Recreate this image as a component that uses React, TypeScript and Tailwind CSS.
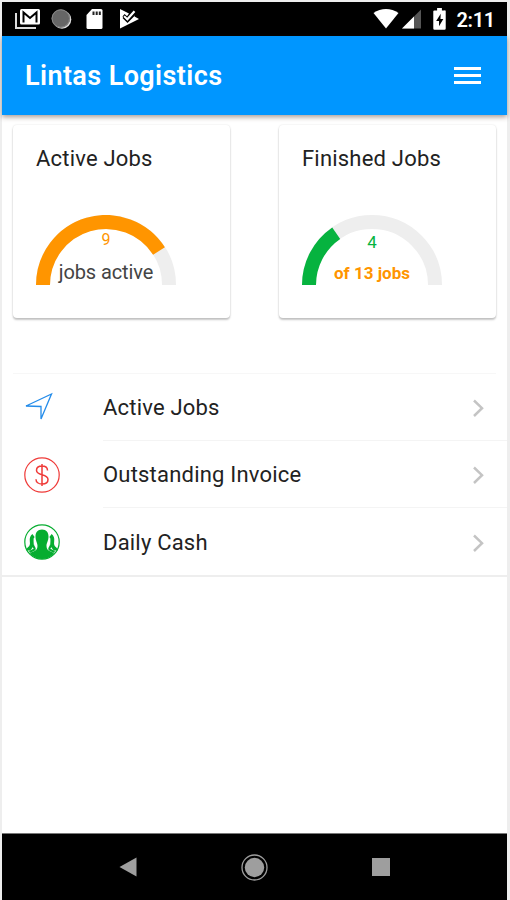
import React from 'react';

const gauges = [
  { title: 'Active Jobs', value: 9, total: 11, color: '#ff9500' },
  { title: 'Finished Jobs', value: 4, total: 13, color: '#06b33f' },
];

const Gauge = ({ value, total, color }: { value: number; total: number; color: string }) => {
  const angle = Math.PI * (1 - value / total);
  const x = 70 + 63 * Math.cos(angle);
  const y = 70 - 63 * Math.sin(angle);
  return (
    <svg width="140" height="70" viewBox="0 0 140 70" fill="none" strokeWidth="14" className="block">
      <path d="M7 70A63 63 0 0 1 133 70" stroke="#eeeeee" />
      <path d={`M7 70A63 63 0 0 1 ${x} ${y}`} stroke={color} />
    </svg>
  );
};

const StatusBar = () => (
  <div className="flex h-[34px] items-center bg-black pl-[13px] pr-[12px] text-white">
    <svg width="25" height="21" viewBox="0 0 25 21" className="mr-[11px]">
      <path d="M1 4v15h20" fill="none" stroke="#ddd" strokeWidth="2" />
      <rect x="5" y="0" width="20" height="15.500" rx="1.500" fill="#fff" />
      <path d="M8.500 13.500V3.500l6.500 5.500 6.500-5.500v10" fill="none" stroke="#000" strokeWidth="2" />
    </svg>
    <svg width="21" height="21" viewBox="0 0 21 21" className="mr-[14px]">
      <circle cx="11" cy="10.500" r="9.300" fill="#ddd" />
      <circle cx="9.800" cy="9.500" r="9.300" fill="#666" />
      <circle cx="9.800" cy="9.500" r="8.700" fill="none" stroke="#888" />
    </svg>
    <svg width="17" height="21" viewBox="0 0 17 21" className="mr-[17px]">
      <path d="M6 0h9a1.500 1.500 0 0 1 1.500 1.500v17A1.500 1.500 0 0 1 15 20H2a1.500 1.500 0 0 1-1.500-1.500V6z" fill="#fff" />
      <path d="M7.500 2.500V6M10.700 2.500V6M13.800 2.500V6" stroke="#222" strokeWidth="2" />
    </svg>
    <svg width="19" height="21" viewBox="0 0 19 21">
      <path d="M0 0l9 4.500L7 7.200 4.500 5 2.500 7.500 7.500 13 15 5.500 14.500 7.500l4.500 2.500L0 19.500z" fill="#fff" />
      <path d="M4 7.200L7.300 10.300 14.500 2.200" fill="none" stroke="#fff" strokeWidth="2.200" />
      <path d="M3 8.500L7.500 13 16 4.500" fill="none" stroke="#000" strokeWidth="1.300" />
    </svg>
    <svg width="26" height="21" viewBox="0 0 26 21" className="ml-auto mr-[3px]">
      <path d="M.5 4C8-1.200 18-1.200 25.500 4L13 19.500z" fill="#fff" />
    </svg>
    <svg width="20" height="21" viewBox="0 0 20 21" className="mr-[11px]">
      <path d="M0 19.500L19 .5v19z" fill="#555" />
      <path d="M0 19.500L12 7.500v12z" fill="#fff" />
    </svg>
    <svg width="13" height="22" viewBox="0 0 13 23" className="mr-[10px]">
      <path d="M4 0h5v2.500h2.500A1.300 1.300 0 0 1 13 4v17.500a1.300 1.300 0 0 1-1.300 1.300H1.300A1.300 1.300 0 0 1 0 21.500V4a1.300 1.300 0 0 1 1.300-1.500H4z" fill="#fff" />
      <path d="M7.800 6L3 13.500h3V19l4.500-7.500h-3z" fill="#000" />
    </svg>
    <span className="relative top-px text-[20px] leading-none font-semibold tracking-[-0.3px]">2:11</span>
  </div>
);

const SendIcon = () => (
  <svg width="36" height="36" viewBox="0 0 36 36" fill="none" stroke="#248cea" strokeWidth="1.300">
    <path d="M2 16L27.500 4 17 29V16.500z" />
  </svg>
);

const DollarIcon = () => (
  <svg width="36" height="36" viewBox="0 0 36 36" fill="none" stroke="#ef3b39" strokeWidth="1.500">
    <circle cx="18" cy="18" r="17.200" strokeWidth="1.200" />
    <path d="M18 7v22M23.500 13.500c0-2.800-2.300-4.500-5.500-4.500s-5.500 1.600-5.500 4.300c0 2.900 2.500 3.700 5.500 4.500s6 1.700 6 4.800c0 2.800-2.600 4.500-6 4.500s-6-1.900-6-4.900" />
  </svg>
);

const PeopleIcon = () => (
  <svg width="36" height="36" viewBox="0 0 36 36" fill="#06ad30">
    <circle cx="18" cy="18" r="17.200" fill="none" stroke="#06ad30" strokeWidth="1.200" />
    <path d="M18 5.500c4.500 0 6.500 3 6.500 7 0 4.500-2 6-2 9.500 0 3 1.500 4.500 3.500 5.300 2 .7 3.500 1.200 4 2.500-3 3.500-7.500 5.200-12 5.200S9 33.300 6 29.800c.5-1.300 2-1.800 4-2.500 2-.8 3.500-2.300 3.500-5.300 0-3.500-2-5-2-9.500 0-4 2-7 6.500-7z" />
    <g fill="none" stroke="#06ad30" strokeWidth="3.800">
      <path d="M9.500 11.500C5.500 14.500 9 18 7.500 21.500 6.500 24.500 4 25 4 26.500" />
      <path d="M26.500 11.500c4 3 .5 6.500 2 10 1 3 3.500 3.500 3.500 5" />
    </g>
    <g fill="none" stroke="#06ad30" strokeWidth="2.200">
      <path d="M9 20.500c.2 3 2.200 3.200 1.500 5L5.500 28" />
      <path d="M27 20.500c-.2 3-2.200 3.200-1.500 5l5 2.500" />
    </g>
  </svg>
);

const menu = [
  { icon: <SendIcon />, label: 'Active Jobs' },
  { icon: <DollarIcon />, label: 'Outstanding Invoice' },
  { icon: <PeopleIcon />, label: 'Daily Cash' },
];

const App = () => {
  return (
    <div className="h-[900px] w-[510px] bg-[#eeeeee] pt-[2px] pr-[3px] pl-[2px] font-['Roboto',sans-serif]">
      <div className="flex h-full flex-col bg-white">
        <StatusBar />
        <header className="flex h-[79px] shrink-0 items-center justify-between bg-[#0096ff] pr-[26px] pl-[23px] shadow-[0_2px_5px_rgba(60,30,20,0.45)]">
          <h1 className="relative top-px text-[27px] leading-none font-semibold tracking-[0.4px] text-white">Lintas Logistics</h1>
          <div className="flex w-[27px] flex-col gap-[4px]">
            <span className="h-[3px] bg-white" />
            <span className="h-[3px] bg-white" />
            <span className="h-[3px] bg-white" />
          </div>
        </header>

        <section className="flex justify-between pt-[10px] pr-[11px] pl-[11px]">
          {gauges.map((gauge, index) => (
            <div key={index} className="h-[193px] w-[217px] rounded-[4px] bg-white px-[23px] pt-[22px] shadow-[0_2px_2px_rgba(0,0,0,0.22),0_0_2px_rgba(0,0,0,0.12)]">
              <h2 className="text-[22px] leading-[24px] tracking-[0.2px] whitespace-nowrap text-[#222]">{gauge.title}</h2>
              <div className="relative mt-[44px] w-[140px]">
                <Gauge value={gauge.value} total={gauge.total} color={gauge.color} />
                {index === 0 ? (
                  <div className="absolute inset-0 pt-[17px] text-center whitespace-nowrap">
                    <div className="text-[16px] leading-[16px] text-[#ff9500]">9</div>
                    <div className="mt-[12px] text-[20px] leading-[24px] tracking-[-0.1px] text-[#444]">jobs active</div>
                  </div>
                ) : (
                  <div className="absolute inset-0 pt-[19px] text-center whitespace-nowrap">
                    <div className="text-[17px] leading-[16px] text-[#06b33f]">4</div>
                    <div className="mt-[11px] text-[17px] leading-[24px] font-bold text-[#ff9500]">of 13 jobs</div>
                  </div>
                )}
              </div>
            </div>
          ))}
        </section>

        <nav className="mt-[55px] border-b-2 border-[#eeeeee]">
          <div className="mr-[11px] ml-[11px] h-px bg-[#f7f7f7]" />
          {menu.map((item, index) => (
            <div key={index} className="flex h-[67px] items-stretch pl-[22px]">
              <div className="flex w-[79px] items-center">{item.icon}</div>
              <div className={`flex flex-1 items-center justify-between pr-[22px] ${index < 2 ? 'border-b border-[#f4f4f4]' : ''}`}>
                <span className="relative top-[1px] text-[22px] leading-none tracking-[0.2px] text-[#222]">{item.label}</span>
                <svg width="13" height="18" viewBox="0 0 13 18" fill="none" stroke="#c4c4c4" strokeWidth="2.500" className="relative top-[1px]">
                  <path d="M2 1.500L10 9.200 2 17" />
                </svg>
              </div>
            </div>
          ))}
        </nav>

        <footer className="mt-auto flex h-[67px] items-center justify-between border-t border-[#777] bg-black px-[117px] text-[#9e9e9e]">
          <svg width="18" height="20" viewBox="0 0 18 20" fill="currentColor">
            <path d="M.5 10L17.500.5v19z" />
          </svg>
          <svg width="27" height="27" viewBox="0 0 27 27" fill="currentColor">
            <circle cx="13.500" cy="13.500" r="9.700" />
            <circle cx="13.500" cy="13.500" r="12.500" fill="none" stroke="currentColor" strokeWidth="1.300" />
          </svg>
          <span className="h-[18px] w-[18px] bg-current" />
        </footer>
      </div>
    </div>
  );
};

export default App;
